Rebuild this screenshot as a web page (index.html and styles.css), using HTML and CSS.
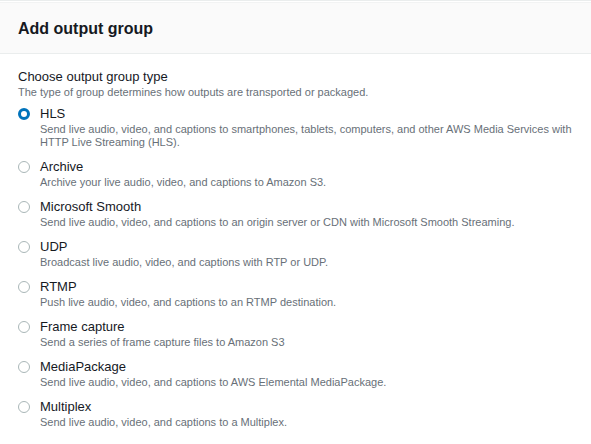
FILE: index.html
```html
<!DOCTYPE html>
<html>
<head>
<meta charset="utf-8">
<link rel="stylesheet" href="styles.css">
</head>
<body>
<div class="panel">
  <div class="header"><h2 class="title">Add output group</h2></div>
  <div class="content">
    <div class="field-label">Choose output group type</div>
    <div class="field-desc">The type of group determines how outputs are transported or packaged.</div>
    <div class="options">
      <div class="option">
        <span class="radio checked"></span>
        <div class="text">
          <div class="opt-label">HLS</div>
          <div class="opt-desc">Send live audio, video, and captions to smartphones, tablets, computers, and other AWS Media Services with HTTP Live Streaming (HLS).</div>
        </div>
      </div>
      <div class="option">
        <span class="radio"></span>
        <div class="text">
          <div class="opt-label">Archive</div>
          <div class="opt-desc">Archive your live audio, video, and captions to Amazon S3.</div>
        </div>
      </div>
      <div class="option">
        <span class="radio"></span>
        <div class="text">
          <div class="opt-label">Microsoft Smooth</div>
          <div class="opt-desc">Send live audio, video, and captions to an origin server or CDN with Microsoft Smooth Streaming.</div>
        </div>
      </div>
      <div class="option">
        <span class="radio"></span>
        <div class="text">
          <div class="opt-label">UDP</div>
          <div class="opt-desc">Broadcast live audio, video, and captions with RTP or UDP.</div>
        </div>
      </div>
      <div class="option">
        <span class="radio"></span>
        <div class="text">
          <div class="opt-label">RTMP</div>
          <div class="opt-desc">Push live audio, video, and captions to an RTMP destination.</div>
        </div>
      </div>
      <div class="option">
        <span class="radio"></span>
        <div class="text">
          <div class="opt-label">Frame capture</div>
          <div class="opt-desc">Send a series of frame capture files to Amazon S3</div>
        </div>
      </div>
      <div class="option">
        <span class="radio"></span>
        <div class="text">
          <div class="opt-label">MediaPackage</div>
          <div class="opt-desc">Send live audio, video, and captions to AWS Elemental MediaPackage.</div>
        </div>
      </div>
      <div class="option">
        <span class="radio"></span>
        <div class="text">
          <div class="opt-label">Multiplex</div>
          <div class="opt-desc">Send live audio, video, and captions to a Multiplex.</div>
        </div>
      </div>
    </div>
  </div>
</div>
</body>
</html>
```
FILE: styles.css
```css
html, body {
  margin: 0;
  padding: 0;
  background: #ffffff;
}
body {
  font-family: "Liberation Sans", Arial, sans-serif;
  color: #16191f;
}
.panel {
  padding-top: 1px;
  border-top: 1px solid #eaeded;
}
.header {
  background: #fafafa;
  border-top: 1px solid #f2f3f3;
  border-bottom: 1px solid #eaeded;
  height: 50px;
  padding: 0 18px;
  display: flex;
  align-items: center;
}
.title {
  margin: 0;
  font-size: 16px;
  font-weight: 700;
  line-height: 20px;
  padding-top: 2px;
}
.content {
  padding: 15px 18px 0 18px;
}
.field-label {
  font-size: 13px;
  line-height: 16px;
}
.field-desc {
  font-size: 11px;
  line-height: 15px;
  color: #687078;
}
.options {
  display: flex;
  flex-direction: column;
  gap: 9px;
  margin-top: 5px;
}
.option {
  display: flex;
  align-items: flex-start;
}
.radio {
  box-sizing: border-box;
  width: 12px;
  height: 12px;
  border-radius: 50%;
  border: 1px solid #aab7b8;
  background: #fff;
  margin-top: 3px;
  flex: none;
}
.radio.checked {
  border: 3.5px solid #0073bb;
}
.text {
  margin-left: 10px;
}
.opt-label {
  font-size: 13px;
  line-height: 18px;
}
.opt-desc {
  font-size: 11px;
  line-height: 13px;
  color: #687078;
  max-width: 535px;
}
```
